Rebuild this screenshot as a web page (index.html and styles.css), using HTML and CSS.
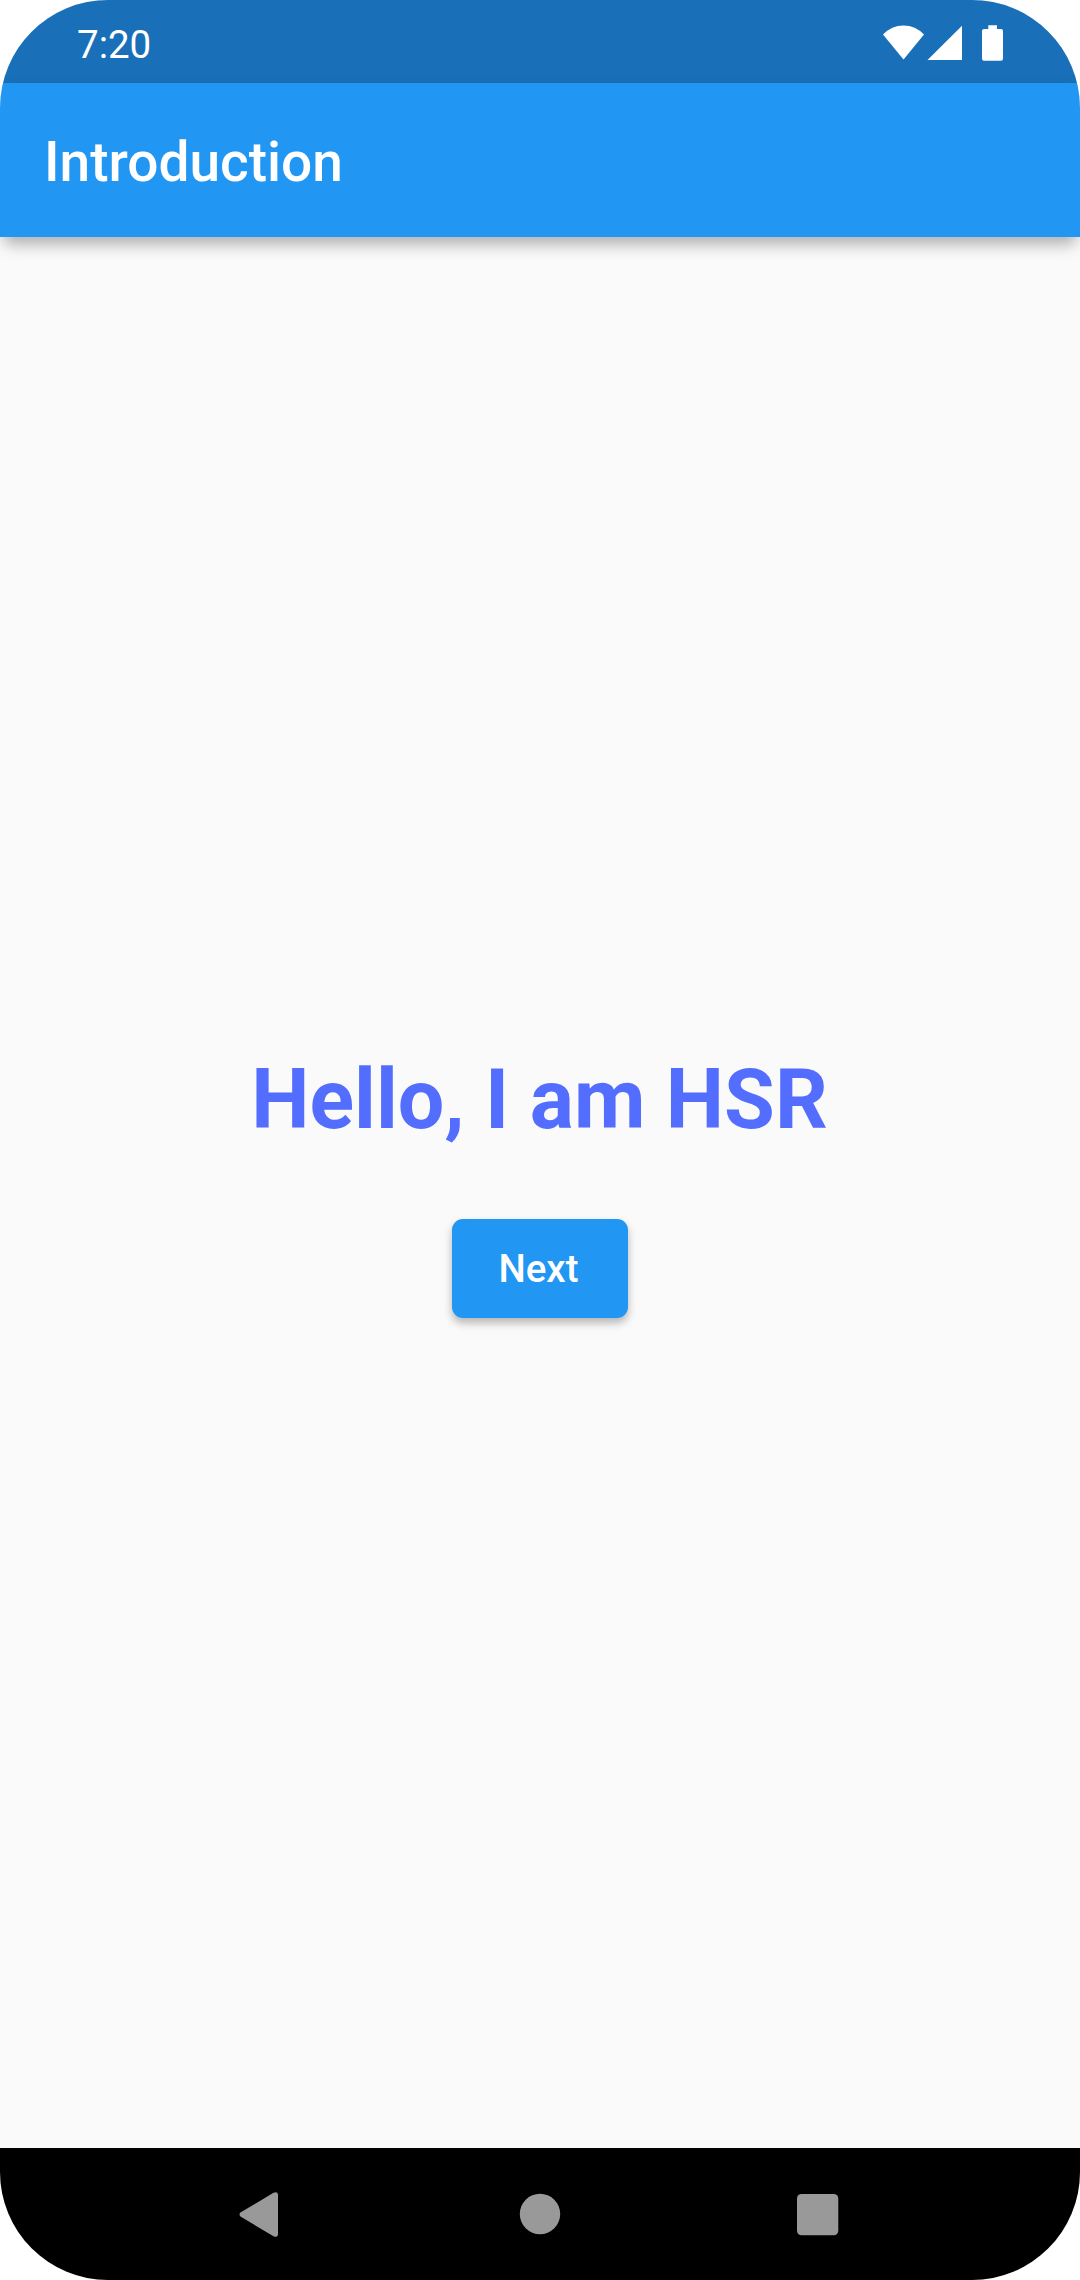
FILE: index.html
```html
<!DOCTYPE html>
<html lang="en">
<head>
<meta charset="utf-8">
<title>Introduction</title>
<link rel="stylesheet" href="styles.css">
</head>
<body>
<div class="screen">
  <div class="status-bar">
    <span class="clock">7:20</span>
    <svg class="status-icons" width="122" height="38" viewBox="0 0 122 38" fill="#fff" aria-hidden="true">
      <path d="M0 9.500Q8.500 .4 20.500 .4Q32.500 .4 41 9.500L20.500 34.500Z"/>
      <path d="M79 .8V34.900H44.500Z"/>
      <path d="M105.300 .3H114V4H118Q120 4 120 6V33.500Q120 35.800 118 35.800H101Q99 35.800 99 33.500V6Q99 4 101 4H105.300Z"/>
    </svg>
  </div>
  <header class="app-bar"><h1 class="title">Introduction</h1></header>
  <main class="content">
    <p class="greeting">Hello, I am HSR</p>
    <div class="tap-target"><button class="next" type="button">Next</button></div>
  </main>
  <nav class="nav-bar">
    <svg class="nav-icons" width="600" height="48" viewBox="0 0 600 48" fill="#999" aria-hidden="true">
      <path d="M1.800 22.300L34.500 2.700Q38.600 1 39 4.500V44.500Q38.600 48 34.500 46.200L1.800 26.800Q-.6 24.500 1.800 22.300Z"/>
      <circle cx="301" cy="24" r="20.200"/>
      <rect x="558" y="4" width="41.300" height="41.300" rx="4.500"/>
    </svg>
  </nav>
</div>
</body>
</html>
```
FILE: styles.css
```css
body {
  margin: 0;
  background: #fff;
  font-family: Roboto, sans-serif;
}

.screen {
  display: flex;
  flex-direction: column;
  width: 1080px;
  height: 2280px;
  overflow: hidden;
  border-radius: 108px;
  background: #fafafa;
}

.status-bar {
  display: flex;
  justify-content: space-between;
  flex: none;
  box-sizing: border-box;
  height: 83px;
  padding: 0 75px 0 77px;
  background: #1a70b8;
}

.clock {
  color: #fff;
  font-size: 38.5px;
  line-height: 90px;
}

.status-icons {
  margin-top: 25px;
}

.app-bar {
  display: flex;
  align-items: center;
  flex: none;
  box-sizing: border-box;
  height: 154px;
  padding: 4px 0 0 44px;
  background: #2196f3;
  box-shadow: 0 14px 14px -5px rgba(0, 0, 0, 0.22), 0 3px 14px -2px rgba(0, 0, 0, 0.12);
}

.title {
  margin: 0;
  color: #fff;
  font-size: 55px;
  font-weight: 500;
  line-height: 64px;
}

.content {
  display: flex;
  flex: 1;
  flex-direction: column;
  align-items: center;
  justify-content: center;
  gap: 55px;
}

.greeting {
  margin: 0;
  padding-right: 1px;
  color: #536dfe;
  font-size: 82.5px;
  font-weight: 700;
  line-height: 97px;
}

.tap-target {
  display: flex;
  align-items: center;
  height: 132px;
}

.next {
  width: 176px;
  height: 99px;
  padding: 0 3px 0 0;
  border: 0;
  border-radius: 11px;
  background: #2196f3;
  box-shadow: 0 5px 8px rgba(0, 0, 0, 0.28);
  color: #fff;
  font: 500 38.5px/45px Roboto, sans-serif;
}

.nav-bar {
  display: flex;
  flex: none;
  height: 132px;
  padding: 0 239px;
  background: #000;
}

.nav-icons {
  margin-top: 42px;
}
```
